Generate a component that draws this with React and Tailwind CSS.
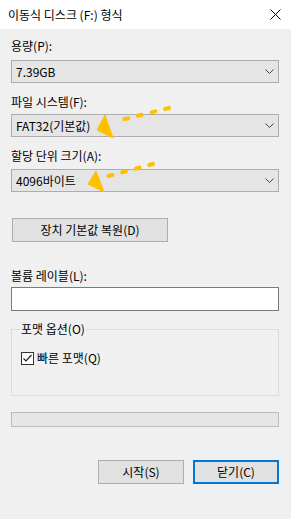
import React from "react";

const font = { fontFamily: '"Noto Sans CJK KR", "Noto Sans", sans-serif' };

function Chevron() {
  return (
    <svg width="9" height="5" viewBox="0 0 9 5" className="shrink-0">
      <path d="M0.5 0.5 L4.5 4.5 L8.5 0.5" fill="none" stroke="#444" strokeWidth="1" />
    </svg>
  );
}

function Select({ value, className = "" }) {
  return (
    <div
      className={
        "flex h-[23px] w-[268px] items-center justify-between border border-[#adadad] bg-[#e5e5e5] pl-[4px] pr-[4px] text-[12px] leading-[16px] text-black " +
        className
      }
    >
      <span>{value}</span>
      <Chevron />
    </div>
  );
}

function Label({ children, className = "" }) {
  return <div className={"h-[16px] text-[12px] leading-[16px] text-black " + className}>{children}</div>;
}

export default function App() {
  return (
    <div className="relative h-[519px] w-[291px] overflow-hidden bg-[#f0f0f0]" style={font}>
      {/* title bar */}
      <div className="flex h-[29px] items-center justify-between bg-white pl-[8px] pr-[10px]">
        <span className="text-[12px] leading-[16px] text-black">이동식 디스크 (F:) 형식</span>
        <svg width="11" height="11" viewBox="0 0 11 11">
          <path d="M0.5 0.5 L10.5 10.5 M10.5 0.5 L0.5 10.5" stroke="#000" strokeWidth="1" />
        </svg>
      </div>

      <div className="flex flex-col pl-[11px]">
        <Label className="mt-[9px]">용량(P):</Label>
        <Select value="7.39GB" className="mt-[6px]" />

        <Label className="mt-[11px]">파일 시스템(F):</Label>
        <Select value="FAT32(기본값)" className="mt-[4px]" />

        <Label className="mt-[11px]">할당 단위 크기(A):</Label>
        <Select value="4096바이트" className="mt-[5px]" />

        <button className="ml-[1px] mt-[26px] flex h-[24px] w-[156px] items-center justify-center border border-[#adadad] bg-[#e1e1e1] text-[12px] leading-[16px] text-black">
          장치 기본값 복원(D)
        </button>

        <Label className="mt-[26px]">볼륨 레이블(L):</Label>
        <div className="mt-[3px] h-[24px] w-[268px] border border-[#7a7a7a] bg-white" />

        <fieldset className="mt-[10px] h-[75px] w-[268px] border border-[#dcdcdc] px-0 pb-0">
          <legend className="ml-[8px] px-[1px] text-[12px] leading-[16px] text-black">포맷 옵션(O)</legend>
          <div className="ml-[9px] mt-[13px] flex items-center gap-[3px]">
            <div className="flex h-[13px] w-[13px] items-center justify-center border border-[#333333] bg-white">
              <svg width="11" height="11" viewBox="0 0 11 11">
                <path d="M1.5 5.5 L4 8 L9.5 2" fill="none" stroke="#222" strokeWidth="1.2" />
              </svg>
            </div>
            <span className="text-[12px] leading-[16px] text-black">빠른 포맷(Q)</span>
          </div>
        </fieldset>

        <div className="mt-[16px] h-[15px] w-[268px] border border-[#bcbcbc] bg-[#e6e6e6]" />

        <div className="mt-[33px] flex w-[268px] justify-end gap-[9px]">
          <button className="flex h-[24px] w-[86px] items-center justify-center border border-[#adadad] bg-[#e1e1e1] text-[12px] leading-[16px] text-black">
            시작(S)
          </button>
          <button className="flex h-[24px] w-[86px] items-center justify-center border-2 border-[#0078d7] bg-[#e1e1e1] text-[12px] leading-[16px] text-black">
            닫기(C)
          </button>
        </div>
      </div>

      {/* annotation arrows */}
      <svg className="pointer-events-none absolute left-0 top-0" width="291" height="519" viewBox="0 0 291 519">
        <line x1="169" y1="108" x2="117" y2="121" stroke="#ffc000" strokeWidth="4" strokeLinecap="round" strokeDasharray="4 10" />
        <polygon points="105,115 97,130 113,138" fill="#ffc000" stroke="#ffc000" strokeWidth="1" strokeLinejoin="round" />
        <line x1="153" y1="164" x2="105" y2="177" stroke="#ffc000" strokeWidth="4" strokeLinecap="round" strokeDasharray="4 10" />
        <polygon points="96,171 88,184 104,192" fill="#ffc000" stroke="#ffc000" strokeWidth="1" strokeLinejoin="round" />
      </svg>
    </div>
  );
}
